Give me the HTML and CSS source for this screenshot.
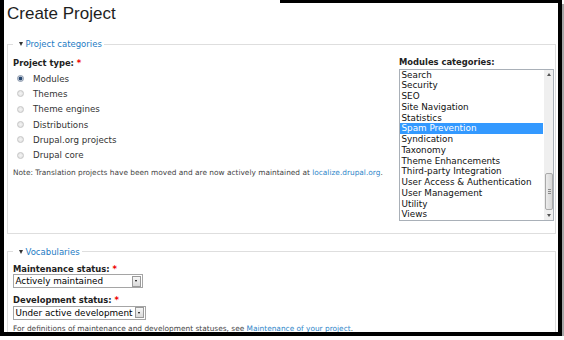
FILE: index.html
```html
<!DOCTYPE html>
<html lang="en">
<head>
    <meta charset="UTF-8">
    <meta name="viewport" content="width=device-width, initial-scale=1.0">
    <title>Create Project</title>
    <link rel="stylesheet" href="styles.css">
</head>
<body>

<div class="frame">
    <h1>Create Project</h1>

    <!-- Project categories -->
    <fieldset class="group">
        <legend><span class="arrow"></span>Project categories</legend>
        <div class="columns">
            <div class="col-left">
                <div class="label">Project type: <span class="req">*</span></div>
                <ul class="radios">
                    <li><span class="radio checked"></span>Modules</li>
                    <li><span class="radio"></span>Themes</li>
                    <li><span class="radio"></span>Theme engines</li>
                    <li><span class="radio"></span>Distributions</li>
                    <li><span class="radio"></span>Drupal.org projects</li>
                    <li><span class="radio"></span>Drupal core</li>
                </ul>
                <p class="note">Note: Translation projects have been moved and are now actively maintained at <a href="#">localize.drupal.org</a>.</p>
            </div>
            <div class="col-right">
                <div class="label label-tight">Modules categories:</div>
                <div class="listbox">
                    <ul class="options">
                        <li>Search</li>
                        <li>Security</li>
                        <li>SEO</li>
                        <li>Site Navigation</li>
                        <li>Statistics</li>
                        <li class="selected">Spam Prevention</li>
                        <li>Syndication</li>
                        <li>Taxonomy</li>
                        <li>Theme Enhancements</li>
                        <li>Third-party Integration</li>
                        <li>User Access &amp; Authentication</li>
                        <li>User Management</li>
                        <li>Utility</li>
                        <li>Views</li>
                    </ul>
                    <div class="scrollbar">
                        <span class="sb-btn sb-up"></span>
                        <div class="sb-track"><span class="sb-thumb"></span></div>
                        <span class="sb-btn sb-down"></span>
                    </div>
                </div>
            </div>
        </div>
    </fieldset>

    <!-- Vocabularies -->
    <fieldset class="group group-vocab">
        <legend><span class="arrow"></span>Vocabularies</legend>
        <div class="field-label">Maintenance status: <span class="req">*</span></div>
        <div class="select select-maint">
            <span class="select-text">Actively maintained</span>
            <span class="select-btn"></span>
        </div>
        <div class="field-label field-label-next">Development status: <span class="req">*</span></div>
        <div class="select select-dev">
            <span class="select-text">Under active development</span>
            <span class="select-btn"></span>
        </div>
        <p class="help">For definitions of maintenance and development statuses, see <a href="#">Maintenance of your project</a>.</p>
    </fieldset>
</div>

</body>
</html>
```

FILE: styles.css
```css
body {
    margin: 0;
    background: #fff;
    font-family: "DejaVu Sans", Verdana, sans-serif;
    color: #222;
}

/* Marco de la ventana */
.frame {
    position: relative;
    width: 549px;
    height: 332px;
    padding: 0 2px 0 3px;
    border: 4px solid #000;
    border-top: 0;
    box-shadow: 2px 4px 0 #a6a6a6;
    overflow: hidden;
    background: #fff;
}

.frame:before {
    content: '';
    position: absolute;
    top: 0;
    left: 276px;
    right: 0;
    height: 3px;
    background: #000;
}

h1 {
    margin: 4px 0 0;
    font-family: "Liberation Sans", Arial, sans-serif;
    font-size: 17px;
    line-height: 20px;
    font-weight: normal;
    color: #1e1e1e;
}

a {
    color: #2f86c9;
    text-decoration: none;
}

/* Fieldsets */
.group {
    margin: 14px 0 0;
    padding: 7px 1px 11.5px 5px;
    border: 1px solid #dedede;
    min-width: 0;
}

.group-vocab {
    margin-top: 12px;
    padding-top: 7.5px;
    padding-bottom: 20px;
}

legend {
    padding: 0 2px 0 6px;
    font-size: 8.5px;
    line-height: 12px;
    color: #1d7bc4;
}

.arrow {
    display: inline-block;
    vertical-align: middle;
    margin: -1px 2.5px 0 0;
    border-left: 2px solid transparent;
    border-right: 2px solid transparent;
    border-top: 4px solid #333;
}

.columns {
    display: flex;
}

.col-left {
    flex: 1;
    min-width: 0;
}

.col-right {
    width: 155px;
}

.label {
    font-size: 8.4px;
    line-height: 13px;
    font-weight: bold;
    color: #222;
    white-space: nowrap;
}

.label-tight {
    line-height: 11.5px;
}

.req {
    color: #e00;
}

/* Radios */
.radios {
    list-style: none;
    margin: 0;
    padding: 1px 0 0;
}

.radios li {
    display: flex;
    align-items: center;
    height: 15.3px;
    font-size: 8.7px;
    color: #333;
}

.radio {
    width: 7px;
    height: 7px;
    box-sizing: border-box;
    margin: 0 9px 0 4px;
    border: 1px solid #c6c6c6;
    border-radius: 50%;
    background: radial-gradient(circle, #f4f4f4 0, #dedede 100%);
}

.radio.checked {
    border-color: #8c98aa;
    background: radial-gradient(circle, #26466f 0, #26466f 1.4px, #c9d2de 2.2px);
}

.note {
    margin: 5.5px 0 0;
    font-size: 7.4px;
    line-height: 10px;
    color: #444;
    white-space: nowrap;
}

/* Lista de categorias */
.listbox {
    display: flex;
    height: 150.8px;
    border: 1px solid #a9b0b8;
    background: #fff;
}

.options {
    flex: 1;
    min-width: 0;
    list-style: none;
    margin: 0;
    padding: 0;
    font-size: 8.8px;
    line-height: 10.77px;
    color: #111;
}

.options li {
    padding-left: 1.5px;
    white-space: nowrap;
}

.options li.selected {
    background: #3399ff;
    color: #fff;
}

.scrollbar {
    width: 9px;
    margin-left: 1px;
    display: flex;
    flex-direction: column;
    background: #efefef;
}

.sb-btn {
    height: 10px;
    display: flex;
    align-items: center;
    justify-content: center;
}

.sb-up:before,
.sb-down:before {
    content: '';
    border-left: 2px solid transparent;
    border-right: 2px solid transparent;
}

.sb-up:before {
    border-bottom: 3px solid #555;
}

.sb-down:before {
    border-top: 3px solid #555;
}

.sb-track {
    flex: 1;
    display: flex;
    flex-direction: column;
    justify-content: flex-end;
}

.sb-thumb {
    height: 37.5px;
    box-sizing: border-box;
    margin-left: 1px;
    border: 1px solid #a9a9a9;
    border-radius: 2px;
    background: linear-gradient(to right, #ececec, #d6d6d6);
    display: flex;
    align-items: center;
    justify-content: center;
}

.sb-thumb:before {
    content: '';
    width: 3px;
    height: 5px;
    background: repeating-linear-gradient(#888 0, #888 1px, transparent 1px, transparent 2px);
}

/* Vocabularios */
.field-label {
    font-size: 8.4px;
    line-height: 9px;
    font-weight: bold;
    color: #222;
}

.field-label-next {
    margin-top: 8px;
}

.select {
    display: flex;
    align-items: center;
    box-sizing: border-box;
    height: 14px;
    padding: 0 1px 0 1.5px;
    border: 1px solid #a5a5a5;
    background: #fff;
    font-size: 8.8px;
    color: #000;
}

.select-maint {
    width: 129.5px;
}

.select-dev {
    width: 132.5px;
    margin-top: 0.5px;
}

.select-text {
    flex: 1;
    white-space: nowrap;
}

.select-btn {
    width: 8.5px;
    height: 11px;
    box-sizing: border-box;
    border: 1px solid #9a9a9a;
    background: linear-gradient(#f6f6f6, #dadada);
    display: flex;
    align-items: center;
    justify-content: center;
}

.select-btn:before {
    content: '';
    border-left: 1.5px solid transparent;
    border-right: 1.5px solid transparent;
    border-top: 2.5px solid #000;
}

.help {
    margin: 4.5px 0 0;
    font-size: 7.4px;
    line-height: 9px;
    color: #444;
    white-space: nowrap;
}
```
